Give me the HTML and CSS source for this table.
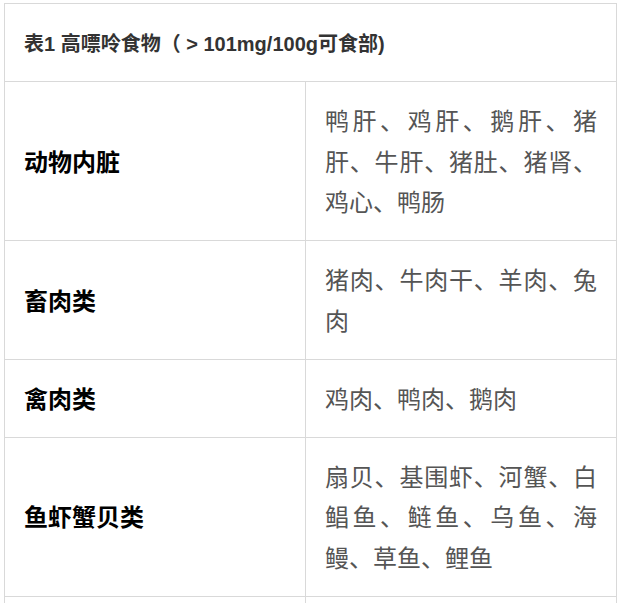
FILE: index.html
```html
<!DOCTYPE html>
<html lang="zh-CN">
<head>
<meta charset="utf-8">
<title>高嘌呤食物</title>
<link rel="stylesheet" href="styles.css">
</head>
<body>
<div class="wrap">
<table class="purine">
  <colgroup><col class="c1"><col class="c2"></colgroup>
  <thead>
    <tr><th colspan="2" class="title">表1 高嘌呤食物（ &gt; 101mg/100g可食部)</th></tr>
  </thead>
  <tbody>
    <tr><td class="cat">动物内脏</td><td class="items">鸭肝、鸡肝、鹅肝、猪肝、牛肝、猪肚、猪肾、鸡心、鸭肠</td></tr>
    <tr><td class="cat">畜肉类</td><td class="items">猪肉、牛肉干、羊肉、兔肉</td></tr>
    <tr><td class="cat">禽肉类</td><td class="items">鸡肉、鸭肉、鹅肉</td></tr>
    <tr><td class="cat">鱼虾蟹贝类</td><td class="items">扇贝、基围虾、河蟹、白鲳鱼、鲢鱼、乌鱼、海鳗、草鱼、鲤鱼</td></tr>
    <tr><td class="cat">&nbsp;</td><td class="items">&nbsp;</td></tr>
  </tbody>
</table>
</div>
</body>
</html>
```
FILE: styles.css
```css
html, body {
  margin: 0;
  padding: 0;
  background: #fff;
}
.wrap {
  padding: 3px 0 0 4px;
}
.purine {
  border-collapse: collapse;
  width: 612px;
  table-layout: fixed;
  font-family: "Liberation Sans", "Noto Sans CJK SC", sans-serif;
}
.c1 { width: 301px; }
.c2 { width: 311px; }
.purine th,
.purine td {
  border: 1px solid #d9d9d9;
  padding: 20px 19px 16px 19px;
  line-height: 40.8px;
  vertical-align: middle;
  text-align: left;
}
.title {
  font-size: 20px;
  font-weight: bold;
  color: #333;
}
.cat {
  font-size: 24px;
  font-weight: bold;
  color: #000;
}
.purine td.items {
  font-size: 24px;
  font-weight: normal;
  color: #555;
  text-align: justify;
  text-justify: inter-character;
}
```
